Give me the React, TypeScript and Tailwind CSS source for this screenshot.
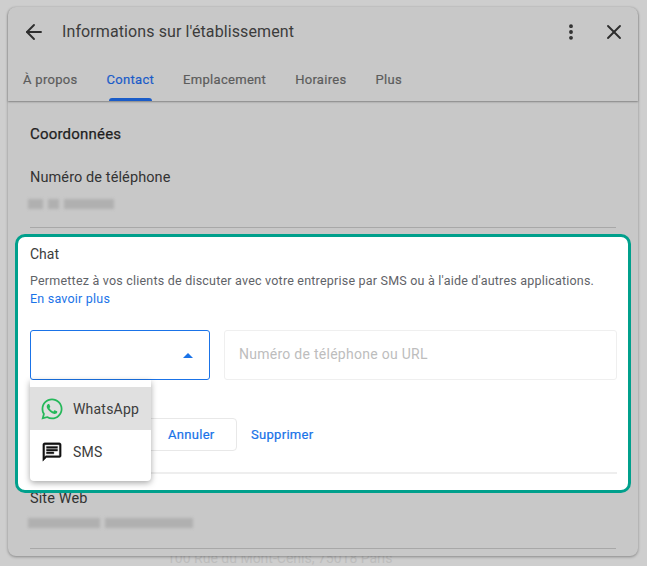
import { ArrowLeft, EllipsisVertical, X } from "lucide-react";
import { FaWhatsapp } from "react-icons/fa";

const tabs = ["À propos", "Contact", "Emplacement", "Horaires", "Plus"];

function Blurred({ widths }: { widths: number[] }) {
  return (
    <div className="ml-[-2px] flex items-center gap-[5px] blur-[1.5px]" aria-hidden>
      {widths.map((w, i) => (
        <div key={i} className="h-[10px] bg-[#b0b0b0]" style={{ width: w }} />
      ))}
    </div>
  );
}

export default function App() {
  return (
    <div className="relative h-[566px] w-[647px] overflow-hidden bg-[#cecece] pt-[7px] pl-[8px] font-['Roboto',sans-serif]">
      <div className="absolute bottom-0 left-[167px] text-[14px] leading-[16px] text-[#bdbdbd]">
        100 Rue du Mont-Cenis, 75018 Paris
      </div>

      <div className="relative h-[549px] w-[630px] overflow-visible rounded-[8px] bg-[#c8c8c8] shadow-[0_1px_3px_rgba(0,0,0,0.35)]">
        {/* header */}
        <div className="relative z-10 h-[94px] rounded-t-[8px] shadow-[0_1px_2px_rgba(0,0,0,0.35)]">
          <div className="flex h-[50px] items-center pl-[14px] pr-[12px]">
            <ArrowLeft size={24} strokeWidth={1.9} className="text-[#2e2e2e]" />
            <div className="ml-[16px] text-[16px] tracking-[0.1px] text-[#3c3c3c]">Informations sur l'établissement</div>
            <EllipsisVertical size={20} strokeWidth={2.6} className="ml-auto text-[#2e2e2e]" />
            <X size={24} strokeWidth={1.9} className="ml-[21px] text-[#2e2e2e]" />
          </div>
          <div className="flex h-[44px] gap-[29px] pl-[15px]">
            {tabs.map((t) => (
              <div
                key={t}
                className={
                  "relative pt-[13px] text-[13px] tracking-[0.3px] [-webkit-text-stroke:0.2px] " +
                  (t === "Contact" ? "text-[#1a5cc8]" : "text-[#5c5c5c]")
                }
              >
                {t}
                {t === "Contact" && (
                  <div className="absolute bottom-0 left-[2px] right-[2px] h-[3px] rounded-t-[3px] bg-[#1a5cc8]" />
                )}
              </div>
            ))}
          </div>
        </div>

        {/* content */}
        <div className="px-[22px]">
          <h2 className="pt-[24px] text-[15px] leading-[18px] tracking-[0.2px] text-[#1f1f1f] [-webkit-text-stroke:0.25px]">
            Coordonnées
          </h2>
          <div className="mt-[26px] text-[14.5px] leading-[18px] tracking-[0.1px] text-[#333333]">Numéro de téléphone</div>
          <div className="mt-[12px] pb-[18px]">
            <Blurred widths={[15, 11, 50]} />
          </div>
          <div className="border-t border-[#a8a8a8]" />

          {/* highlighted chat block */}
          <div className="relative z-20 mx-[-15px] mt-[6px] h-[259px] rounded-[10px] border-[3px] border-[#00a08c] bg-white pl-[12px] pr-[11px]">
            <div className="pt-[8px] text-[14px] leading-[18px] text-[#3c3c3c]">Chat</div>
            <p className="mt-[9px] text-[12.5px] leading-[18px] tracking-[0.21px] text-[#5f6368]">
              Permettez à vos clients de discuter avec votre entreprise par SMS ou à l'aide d'autres applications.
              <br />
              <a className="text-[#1a73e8]">En savoir plus</a>
            </p>

            <div className="mt-[22px] flex gap-[14px]">
              <div className="relative flex h-[50px] w-[180px] items-center justify-end rounded-[3px] border-[1.5px] border-[#1a73e8] pr-[16px]">
                <div className="h-0 w-0 border-x-[5px] border-b-[5px] border-x-transparent border-b-[#1a73e8]" />
              </div>
              <div className="flex h-[50px] flex-1 items-center rounded-[3px] border border-[#efefef] px-[14px] pb-[2px] text-[14px] tracking-[0.27px] text-[#bdbdbd]">
                Numéro de téléphone ou URL
              </div>
            </div>

            <div className="mt-[38px] flex items-center pl-[105px]">
              <button className="h-[33px] w-[102px] rounded-[4px] border border-[#e8e8e8] pl-[32px] text-left text-[13px] tracking-[0.3px] text-[#1a73e8] [-webkit-text-stroke:0.2px]">
                Annuler
              </button>
              <button className="ml-[14px] text-[13px] tracking-[0.3px] text-[#1a73e8] [-webkit-text-stroke:0.2px]">Supprimer</button>
            </div>

            <div className="mt-[21px] h-[2px] bg-[#eeeeee]" />

            {/* dropdown */}
            <div className="absolute left-[12px] top-[143px] h-[101px] w-[121px] rounded-b-[4px] bg-white pt-[7px] shadow-[0_2px_6px_rgba(0,0,0,0.35)]">
              <div className="flex h-[43px] items-center bg-[#e0e0e0] pl-[10px] text-[14px] tracking-[0.2px] text-[#3c3c3c]">
                <FaWhatsapp size={24} className="text-[#25b85a]" />
                <span className="ml-[9px] pt-[1px]">WhatsApp</span>
              </div>
              <div className="flex h-[43px] items-center pl-[11px] text-[14px] tracking-[0.2px] text-[#3c3c3c]">
                <svg width="22" height="22" viewBox="0 0 24 24" fill="#111111" stroke="#111111" strokeWidth="0.4">
                  <path d="M20 2H4c-1.1 0-2 .9-2 2v18l4-4h14c1.1 0 2-.9 2-2V4c0-1.1-.9-2-2-2zm0 14H5.2L4 17.2V4h16v12zM6 12h8v2H6zm0-3h12v2H6zm0-3h12v2H6z" />
                </svg>
                <span className="ml-[10px] pt-[1px]">SMS</span>
              </div>
            </div>
          </div>

          <div className="mt-[-3px] text-[14.5px] leading-[18px] tracking-[0.1px] text-[#333333]">Site Web</div>
          <div className="mt-[10px] pb-[20px]">
            <Blurred widths={[72, 88]} />
          </div>
          <div className="border-t border-[#a8a8a8]" />
        </div>
      </div>
    </div>
  );
}
